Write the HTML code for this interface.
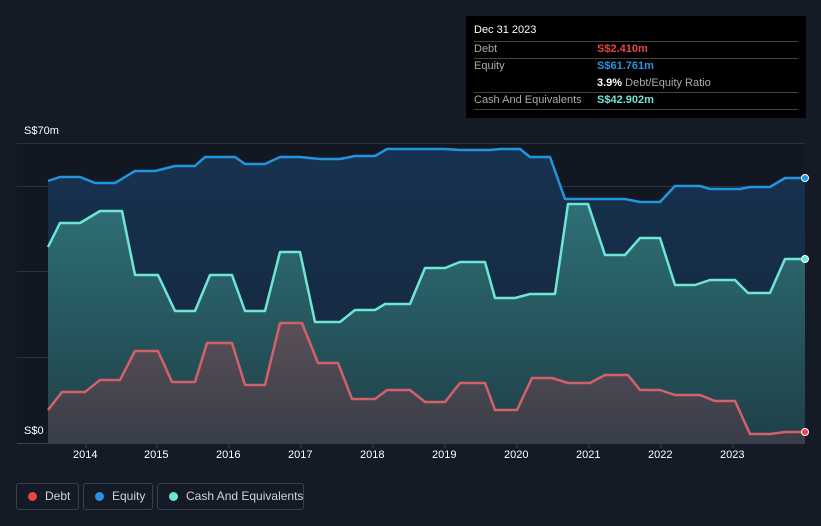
<!DOCTYPE html>
<html><head><style>
body{margin:0;width:821px;height:526px;background:#151b26;font-family:"Liberation Sans",sans-serif;overflow:hidden;position:relative}
.tt{position:absolute;left:466px;top:16px;width:340px;height:102px;background:#000;color:#aaa;font-size:11px}
.tt .r{position:absolute;left:8px;right:8px;border-top:1px solid #444}
.lg{position:absolute;top:483px;height:27px;border:1px solid #3a404a;border-radius:3px;color:#cfd3da;font-size:12px;line-height:25px;box-sizing:border-box;white-space:nowrap}
.lg i{position:absolute;left:11px;top:8px;width:9px;height:9px;border-radius:50%}
.ax{position:absolute;top:449px;color:#fff;font-size:11px}
</style></head><body>
<svg width="821" height="526" style="position:absolute;left:0;top:0">
<defs>
<linearGradient id="ge" x1="0" y1="0" x2="0" y2="1"><stop offset="0" stop-color="#173250"/><stop offset="1" stop-color="#14263a"/></linearGradient>
<linearGradient id="gc" x1="0" y1="0" x2="0" y2="1"><stop offset="0" stop-color="#2e6f75"/><stop offset="1" stop-color="#1f3f48"/></linearGradient>
<linearGradient id="gd" x1="0" y1="0" x2="0" y2="1"><stop offset="0" stop-color="#5a4f58"/><stop offset="1" stop-color="#383d47"/></linearGradient>
</defs>
<rect x="17" y="143" width="788" height="300" fill="#111821"/>
<g stroke="#2a3340" stroke-width="1"><line x1="17" y1="143.5" x2="805" y2="143.5"/><line x1="17" y1="186.5" x2="805" y2="186.5"/><line x1="17" y1="271.5" x2="805" y2="271.5"/><line x1="17" y1="357.5" x2="805" y2="357.5"/></g>
<polygon fill="url(#ge)" points="48,443 48,181 60,177 80,177 95,183 115,183 135,171 155,171 175,166 195,166 205,157 235,157 245,164 265,164 280,157 300,157 320,159 340,159 355,156 375,156 387,149 445,149 460,150 490,150 500,149 520,149 530,157 550,157 565,199 625,199 640,202 660,202 675,186 700,186 710,189 740,189 750,187 770,187 785,178 805,178 805,443"/>
<polygon fill="url(#gc)" points="48,443 48,247 60,223 80,223 100,211 122,211 135,275 158,275 175,311 195,311 210,275 232,275 245,311 265,311 280,252 300,252 315,322 340,322 355,310 375,310 385,304 410,304 425,268 445,268 460,262 485,262 495,298 515,298 530,294 555,294 568,204 588,204 605,255 625,255 640,238 660,238 675,285 695,285 710,280 735,280 748,293 770,293 785,259 805,259 805,443"/>
<polygon fill="url(#gd)" points="48,443 48,410 62,392 85,392 100,380 120,380 135,351 158,351 172,382 195,382 207,343 232,343 245,385 265,385 280,323 302,323 318,363 338,363 352,399 375,399 387,390 410,390 425,402 445,402 460,383 485,383 495,410 517,410 532,378 552,378 568,383 590,383 605,375 628,375 640,390 660,390 675,395 700,395 715,401 735,401 750,434 770,434 785,432 805,432 805,443"/>
<g fill="none" stroke-width="2.5" stroke-linejoin="round">
<polyline stroke="#2394df" points="48,181 60,177 80,177 95,183 115,183 135,171 155,171 175,166 195,166 205,157 235,157 245,164 265,164 280,157 300,157 320,159 340,159 355,156 375,156 387,149 445,149 460,150 490,150 500,149 520,149 530,157 550,157 565,199 625,199 640,202 660,202 675,186 700,186 710,189 740,189 750,187 770,187 785,178 805,178"/>
<polyline stroke="#6ee6d6" points="48,247 60,223 80,223 100,211 122,211 135,275 158,275 175,311 195,311 210,275 232,275 245,311 265,311 280,252 300,252 315,322 340,322 355,310 375,310 385,304 410,304 425,268 445,268 460,262 485,262 495,298 515,298 530,294 555,294 568,204 588,204 605,255 625,255 640,238 660,238 675,285 695,285 710,280 735,280 748,293 770,293 785,259 805,259"/>
<polyline stroke="#d4606a" points="48,410 62,392 85,392 100,380 120,380 135,351 158,351 172,382 195,382 207,343 232,343 245,385 265,385 280,323 302,323 318,363 338,363 352,399 375,399 387,390 410,390 425,402 445,402 460,383 485,383 495,410 517,410 532,378 552,378 568,383 590,383 605,375 628,375 640,390 660,390 675,395 700,395 715,401 735,401 750,434 770,434 785,432 805,432"/>
</g>
<circle cx="805" cy="178" r="3.5" fill="#2394df" stroke="#fff" stroke-width="1"/>
<circle cx="805" cy="259" r="3.5" fill="#6ee6d6" stroke="#fff" stroke-width="1"/>
<circle cx="805" cy="432" r="3.5" fill="#e84545" stroke="#fff" stroke-width="1"/>
<line x1="17" y1="443.5" x2="805" y2="443.5" stroke="#3a4350"/>
<g stroke="#3a4350"><line x1="86" y1="443" x2="86" y2="448"/><line x1="157" y1="443" x2="157" y2="448"/><line x1="229" y1="443" x2="229" y2="448"/><line x1="301" y1="443" x2="301" y2="448"/><line x1="373" y1="443" x2="373" y2="448"/><line x1="445" y1="443" x2="445" y2="448"/><line x1="517" y1="443" x2="517" y2="448"/><line x1="589" y1="443" x2="589" y2="448"/><line x1="661" y1="443" x2="661" y2="448"/><line x1="733" y1="443" x2="733" y2="448"/></g>
</svg>
<div style="position:absolute;left:24px;top:125px;color:#fff;font-size:11px">S$70m</div>
<div style="position:absolute;left:24px;top:425px;color:#fff;font-size:11px">S$0</div>
<div class="ax" style="left:73px">2014</div><div class="ax" style="left:144px">2015</div><div class="ax" style="left:216px">2016</div><div class="ax" style="left:288px">2017</div><div class="ax" style="left:360px">2018</div><div class="ax" style="left:432px">2019</div><div class="ax" style="left:504px">2020</div><div class="ax" style="left:576px">2021</div><div class="ax" style="left:648px">2022</div><div class="ax" style="left:720px">2023</div>
<div class="tt">
<div style="position:absolute;left:8px;top:8px;color:#fff">Dec 31 2023</div>
<div class="r" style="top:25px"></div><div style="position:absolute;left:8px;top:27px">Debt</div><div style="position:absolute;left:131px;top:27px;color:#e84545;font-weight:bold">S$2.410m</div>
<div class="r" style="top:42px"></div><div style="position:absolute;left:8px;top:44px">Equity</div><div style="position:absolute;left:131px;top:44px;color:#2394df;font-weight:bold">S$61.761m</div>
<div style="position:absolute;left:131px;top:61px"><b style="color:#fff">3.9%</b> Debt/Equity Ratio</div>
<div class="r" style="top:76px"></div><div style="position:absolute;left:8px;top:78px">Cash And Equivalents</div><div style="position:absolute;left:131px;top:78px;color:#6ee6d6;font-weight:bold">S$42.902m</div>
<div class="r" style="top:93px"></div>
</div>
<div class="lg" style="left:16px;width:63px"><i style="background:#e84545"></i><span style="margin-left:28px">Debt</span></div>
<div class="lg" style="left:83px;width:70px"><i style="background:#2394df"></i><span style="margin-left:28px">Equity</span></div>
<div class="lg" style="left:157px;width:147px"><i style="background:#6ee6d6"></i><span style="margin-left:28px">Cash And Equivalents</span></div>
</body></html>
